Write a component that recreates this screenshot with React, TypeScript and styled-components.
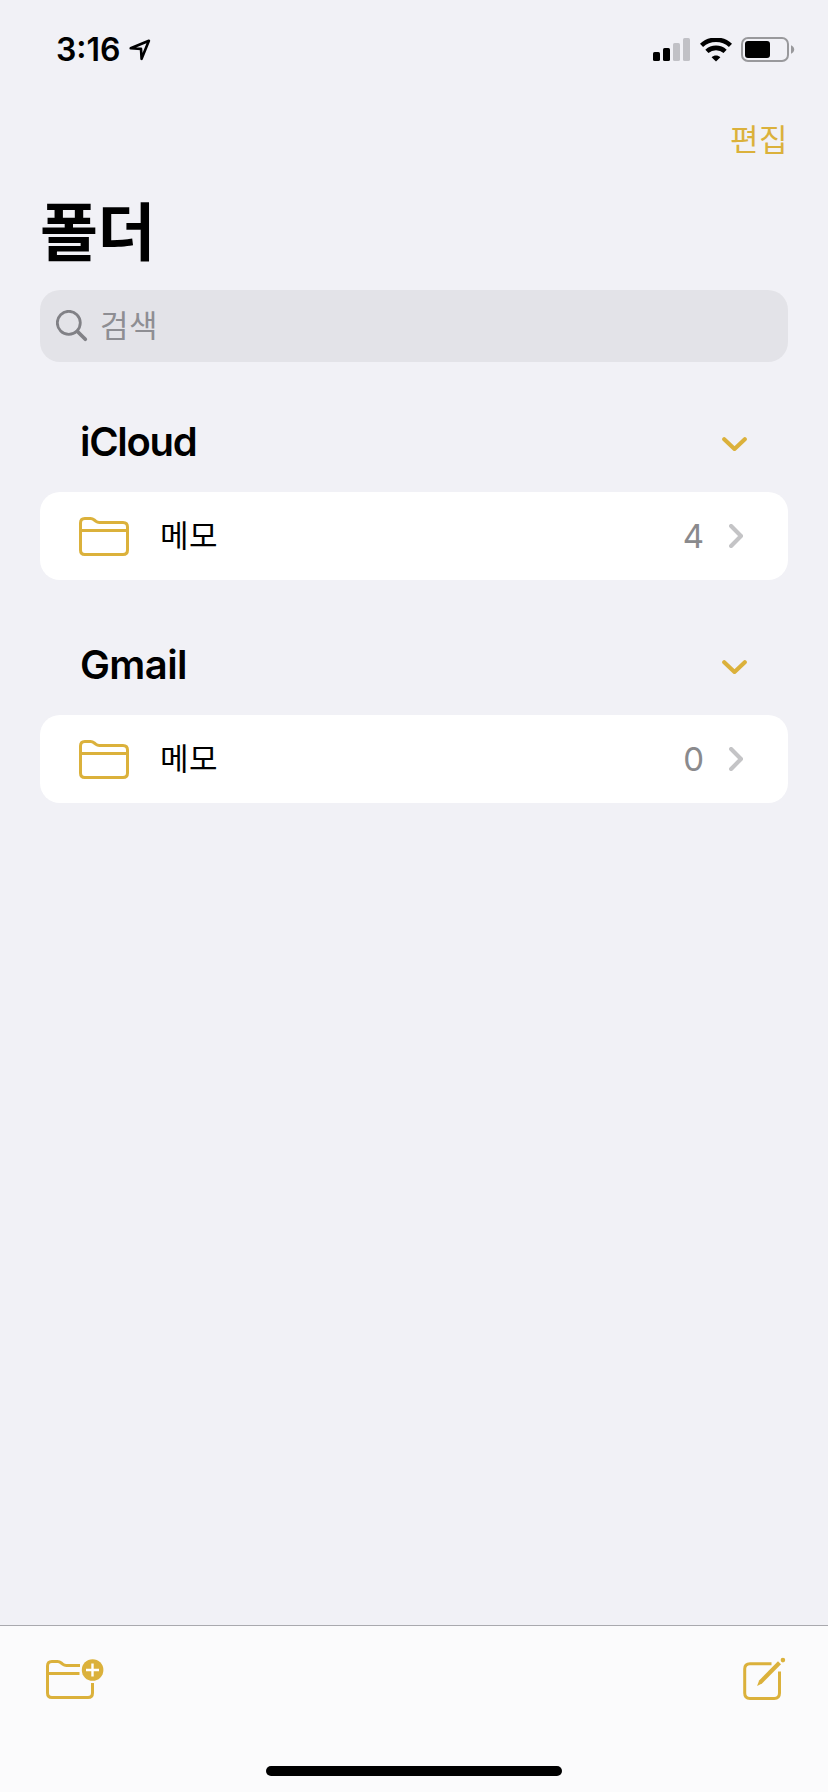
import React from "react";
import styled, { createGlobalStyle } from "styled-components";

const GOLD = "#dbb13b";
const LATIN = `Inter, "Noto Sans CJK KR", sans-serif`;
const KOREAN = `"Noto Sans CJK KR", Inter, sans-serif`;

const GlobalStyle = createGlobalStyle`
  * { box-sizing: border-box; }
  html, body { margin: 0; padding: 0; background: #f1f1f6; }
  svg { display: block; flex: none; }
  button { border: 0; background: none; padding: 0; margin: 0; font: inherit; color: inherit; }
`;

const Screen = styled.div`
  width: 828px;
  height: 1792px;
  display: flex;
  flex-direction: column;
  background: #f1f1f6;
  color: #000;
  font-family: ${LATIN};
  overflow: hidden;
`;

const StatusBar = styled.header`
  height: 100px;
  display: flex;
  align-items: flex-start;
  justify-content: space-between;
  padding: 30px 33px 0 56px;
`;

const StatusGroup = styled.div<{ $gap: number }>`
  height: 39px;
  display: flex;
  align-items: center;
  gap: ${(p) => p.$gap}px;
`;

const Time = styled.span`
  width: 65px;
  font-size: 32px;
  line-height: 39px;
  font-weight: 600;
  letter-spacing: 0;
  font-feature-settings: "case" 1;
  white-space: nowrap;
`;

const NavBar = styled.div`
  height: 76px;
  display: flex;
  align-items: center;
  justify-content: flex-end;
  padding: 0 40px 0 0;
`;

const EditButton = styled.button`
  font-family: ${KOREAN};
  font-size: 31px;
  line-height: 76px;
  letter-spacing: 0.5px;
  color: ${GOLD};
`;

const Title = styled.h1`
  height: 114px;
  margin: 0;
  padding-left: 40px;
  font-family: ${KOREAN};
  font-size: 63px;
  line-height: 103px;
  font-weight: 700;
  letter-spacing: -0.5px;
`;

const SearchField = styled.div`
  height: 72px;
  margin: 0 40px;
  padding-left: 16px;
  display: flex;
  align-items: center;
  gap: 12px;
  border-radius: 20px;
  background: #e3e3e8;
`;

const Placeholder = styled.span`
  font-family: ${KOREAN};
  font-size: 31px;
  line-height: 68px;
  letter-spacing: 0.5px;
  padding-bottom: 4px;
  color: #8e8e93;
`;

const Section = styled.section`
  padding: 0 40px;
  height: 223px;
  display: flex;
  flex-direction: column;
`;

const SectionHeader = styled.div`
  height: 130px;
  padding: 34px 41px 0 40px;
  display: flex;
  align-items: center;
  justify-content: space-between;
`;

const SectionName = styled.h2<{ $tracking: number }>`
  margin: 0;
  padding-bottom: 5px;
  font-size: 40px;
  line-height: 48px;
  font-weight: 600;
  letter-spacing: ${(p) => p.$tracking}px;
`;

const FolderRow = styled.div`
  height: 88px;
  flex: none;
  padding: 0 45px 0 39px;
  display: flex;
  align-items: center;
  border-radius: 20px;
  background: #fff;
`;

const FolderName = styled.span`
  flex: 1;
  padding: 0 0 5px 31px;
  font-family: ${KOREAN};
  font-size: 31px;
  line-height: 83px;
  letter-spacing: 0.5px;
`;

const Count = styled.span`
  margin-right: 25px;
  font-size: 33px;
  line-height: 88px;
  color: #8a8a8d;
`;

const Spacer = styled.div`
  flex: 1;
`;

const Toolbar = styled.footer`
  height: 167px;
  display: flex;
  flex-direction: column;
  align-items: center;
  border-top: 1px solid #a9a9ae;
  background: #fbfbfc;
`;

const ToolbarActions = styled.div`
  width: 100%;
  height: 140px;
  display: flex;
  align-items: flex-start;
  justify-content: space-between;
  padding: 31px 42px 0 45px;
`;

const HomeIndicator = styled.div`
  width: 296px;
  height: 10px;
  border-radius: 5px;
  background: #000;
`;

const LocationIcon = () => (
  <svg width="22" height="22" viewBox="0 0 22 22" fill="none">
    <path d="M1.7 9.3 19.9 1.8 12.6 19.8 12 9.9Z" stroke="#000" strokeWidth="2.6" strokeLinejoin="round" />
  </svg>
);

const SignalIcon = () => (
  <svg width="37" height="24" viewBox="0 0 37 24">
    <rect x="0" y="14" width="7" height="9" rx="1.6" />
    <rect x="10" y="10" width="7" height="13" rx="1.6" />
    <rect x="20" y="5" width="7" height="18" rx="1.6" fill="#c1c1c6" />
    <rect x="30" y="0" width="7" height="23" rx="1.6" fill="#c1c1c6" />
  </svg>
);

const WifiIcon = () => (
  <svg width="32" height="24" viewBox="0 0 32 24" fill="none">
    <path d="M1.5 7.4C9.6-.1 22.4-.1 30.5 7.4" stroke="#000" strokeWidth="4.6" />
    <path d="M6.9 13.4C12 8.7 20 8.7 25.1 13.4" stroke="#000" strokeWidth="4.6" />
    <path d="M16 23.6 11.6 19.2C14.1 17 17.9 17 20.4 19.2Z" fill="#000" />
  </svg>
);

const BatteryIcon = () => (
  <svg width="54" height="25" viewBox="0 0 54 25" fill="none">
    <rect x="1" y="1" width="46" height="23" rx="6" stroke="#99999c" strokeWidth="2" />
    <rect x="4" y="4" width="25" height="17" rx="3" fill="#000" />
    <path d="M50 8.2C52 9 53.2 10.6 53.2 12.5S52 16 50 16.8Z" fill="#99999c" />
  </svg>
);

const SearchIcon = () => (
  <svg width="32" height="32" viewBox="0 0 32 32" fill="none" stroke="#818186">
    <circle cx="12.8" cy="12.8" r="11.5" strokeWidth="2.8" />
    <path d="M21.5 21.5 29.3 29.3" strokeWidth="3.7" strokeLinecap="round" />
  </svg>
);

const FolderIcon = () => (
  <svg width="50" height="39" viewBox="0 0 50 39" fill="none" stroke={GOLD} strokeWidth="3">
    <path d="M1.5 6C1.5 3 2.8 1.5 5.8 1.5H11.5C13.2 1.5 14 1.9 15.3 3L17 4.4C18 5.2 18.7 5.5 20.3 5.5H44C47 5.5 48.5 7 48.5 10V33C48.5 36 47 37.5 44 37.5H5.8C2.8 37.5 1.5 36 1.5 33Z" />
    <path d="M2 13.5H48" />
  </svg>
);

const ChevronDown = () => (
  <svg width="25" height="14" viewBox="0 0 25 14" fill="none">
    <path d="M2.2 2.2 12.5 12 22.8 2.2" stroke={GOLD} strokeWidth="4.1" strokeLinecap="round" strokeLinejoin="round" />
  </svg>
);

const ChevronRight = () => (
  <svg width="14" height="24" viewBox="0 0 14 24" fill="none">
    <path d="M2.1 2 12 12 2.1 22" stroke="#c4c4c6" strokeWidth="4.1" strokeLinecap="round" strokeLinejoin="round" />
  </svg>
);

const NewFolderIcon = () => (
  <svg width="60" height="44" viewBox="0 0 60 44" fill="none">
    <g stroke={GOLD} strokeWidth="3">
      <path d="M35 8.500H21.300C19.700 8.500 19 8.200 18 7.400L16.300 6C15 4.900 14.200 4.500 12.500 4.500H6.900C3.900 4.500 2.500 6 2.500 9V36C2.500 39 3.900 40.500 6.900 40.500H43C46 40.500 47.500 39 47.500 36V26" />
      <path d="M3 16.500H34.500" />
    </g>
    <circle cx="47.6" cy="13" r="10.8" fill={GOLD} />
    <path d="M41 13H54M47.500 6.500V19.500" stroke="#fff" strokeWidth="2.4" />
  </svg>
);

const ComposeIcon = () => (
  <svg width="44" height="44" viewBox="0 0 44 44" fill="none">
    <path d="M29.500 6.700H8C4.200 6.700 2.700 8.200 2.700 12V36C2.700 39.800 4.200 41.400 8 41.400H32.200C36 41.400 37.500 39.800 37.500 36V14.500" stroke={GOLD} strokeWidth="3" />
    <path d="M36 4.200 39 7.200 20 26.500 15.100 29 17.100 23.600Z" fill={GOLD} />
    <circle cx="40.9" cy="3.1" r="2.3" fill={GOLD} />
  </svg>
);

const accounts = [
  { name: "iCloud", folder: "메모", count: 4, tracking: -1.3 },
  { name: "Gmail", folder: "메모", count: 0, tracking: -0.6 },
];

export default function App() {
  return (
    <Screen>
      <GlobalStyle />
      <StatusBar>
        <StatusGroup $gap={8}>
          <Time>3:16</Time>
          <LocationIcon />
        </StatusGroup>
        <StatusGroup $gap={9.5}>
          <SignalIcon />
          <WifiIcon />
          <BatteryIcon />
        </StatusGroup>
      </StatusBar>
      <NavBar>
        <EditButton>편집</EditButton>
      </NavBar>
      <Title>폴더</Title>
      <SearchField>
        <SearchIcon />
        <Placeholder>검색</Placeholder>
      </SearchField>
      {accounts.map((a) => (
        <Section key={a.name}>
          <SectionHeader>
            <SectionName $tracking={a.tracking}>{a.name}</SectionName>
            <ChevronDown />
          </SectionHeader>
          <FolderRow>
            <FolderIcon />
            <FolderName>{a.folder}</FolderName>
            <Count>{a.count}</Count>
            <ChevronRight />
          </FolderRow>
        </Section>
      ))}
      <Spacer />
      <Toolbar>
        <ToolbarActions>
          <NewFolderIcon />
          <ComposeIcon />
        </ToolbarActions>
        <HomeIndicator />
      </Toolbar>
    </Screen>
  );
}
